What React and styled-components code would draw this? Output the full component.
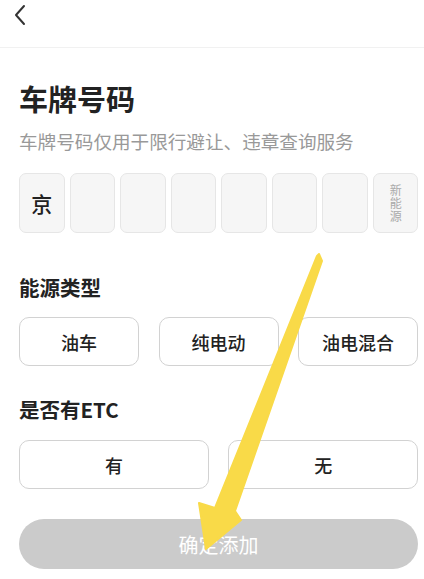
import React from "react";
import styled, { createGlobalStyle } from "styled-components";

const Global = createGlobalStyle`
  html, body { margin: 0; padding: 0; background: #fff; }
  body { font-family: "Noto Sans CJK SC", "Noto Sans", sans-serif; }
  * { box-sizing: border-box; }
`;

const Page = styled.div`
  position: relative;
  width: 424px;
  height: 579px;
  overflow: hidden;
  background: #fff;
`;

const Header = styled.div`
  height: 48px;
  border-bottom: 1px solid #f1f1f1;
  display: flex;
  align-items: flex-start;
  padding: 4px 0 0 10px;
`;

const BackBtn = styled.div`
  width: 20px;
  height: 22px;
  display: flex;
  align-items: center;
  justify-content: center;
`;

const Content = styled.div`
  padding: 0 6px 0 19px;
  display: flex;
  flex-direction: column;
`;

const Title = styled.h1`
  margin: 32px 0 0;
  font-size: 29px;
  line-height: 36px;
  font-weight: 700;
  color: #222;
`;

const Sub = styled.p`
  margin: 13px 0 0;
  font-size: 18.6px;
  line-height: 24px;
  color: #999;
`;

const Plates = styled.div`
  margin-top: 20px;
  display: grid;
  grid-template-columns: repeat(8, 1fr);
  gap: 5px;
`;

const Plate = styled.div`
  height: 60px;
  background: #f6f6f6;
  border: 1px solid #e6e6e6;
  border-radius: 7px;
  display: flex;
  align-items: center;
  justify-content: center;
  font-size: ${p => (p.$small ? "12px" : "21px")};
  line-height: ${p => (p.$small ? "14px" : "24px")};
  font-weight: ${p => (p.$small ? 400 : 500)};
  color: ${p => (p.$small ? "#aaa" : "#222")};
  text-align: center;
  writing-mode: ${p => (p.$small ? "vertical-rl" : "horizontal-tb")};
  letter-spacing: ${p => (p.$small ? "1px" : "0")};
`;

const Section = styled.h2`
  margin: ${p => p.$mt}px 0 0;
  font-size: 20.5px;
  line-height: 28px;
  font-weight: 700;
  color: #222;
`;

const Options = styled.div`
  margin-top: ${p => p.$mt}px;
  display: grid;
  grid-template-columns: repeat(${p => p.$cols}, 1fr);
  gap: 19.5px;
`;

const Option = styled.div`
  height: 49px;
  border: 1.5px solid #d2d2d2;
  border-radius: 10px;
  display: flex;
  align-items: center;
  justify-content: center;
  font-size: 18px;
  font-weight: 500;
  color: #222;
`;

const Confirm = styled.div`
  margin-top: 30px;
  height: 50px;
  border-radius: 25px;
  background: #cbcbcb;
  color: #fff;
  font-size: 20px;
  display: flex;
  align-items: center;
  justify-content: center;
`;

const Arrow = styled.svg`
  position: absolute;
  left: 0;
  top: 0;
  pointer-events: none;
`;

export default function App() {
  return (
    <Page>
      <Global />
      <Header>
        <BackBtn>
          <svg width="14" height="22" viewBox="0 0 14 22">
            <path d="M11 2 L3 11 L11 20" fill="none" stroke="#333" strokeWidth="2" strokeLinecap="round" strokeLinejoin="round" />
          </svg>
        </BackBtn>
      </Header>
      <Content>
        <Title>车牌号码</Title>
        <Sub>车牌号码仅用于限行避让、违章查询服务</Sub>
        <Plates>
          <Plate>京</Plate>
          <Plate />
          <Plate />
          <Plate />
          <Plate />
          <Plate />
          <Plate />
          <Plate $small>新能源</Plate>
        </Plates>
        <Section $mt={40}>能源类型</Section>
        <Options $cols={3} $mt={16}>
          <Option>油车</Option>
          <Option>纯电动</Option>
          <Option>油电混合</Option>
        </Options>
        <Section $mt={29}>是否有ETC</Section>
        <Options $cols={2} $mt={17}>
          <Option>有</Option>
          <Option>无</Option>
        </Options>
        <Confirm>确定添加</Confirm>
      </Content>
      <Arrow width="424" height="579" viewBox="0 0 424 579">
        <polygon
          points="319,254 322,261 235,511 241,520 206,549 199,503 215,508 317,256"
          fill="#f9da48"
          stroke="#f9da48"
          strokeWidth="2"
          strokeLinejoin="round"
        />
      </Arrow>
    </Page>
  );
}
